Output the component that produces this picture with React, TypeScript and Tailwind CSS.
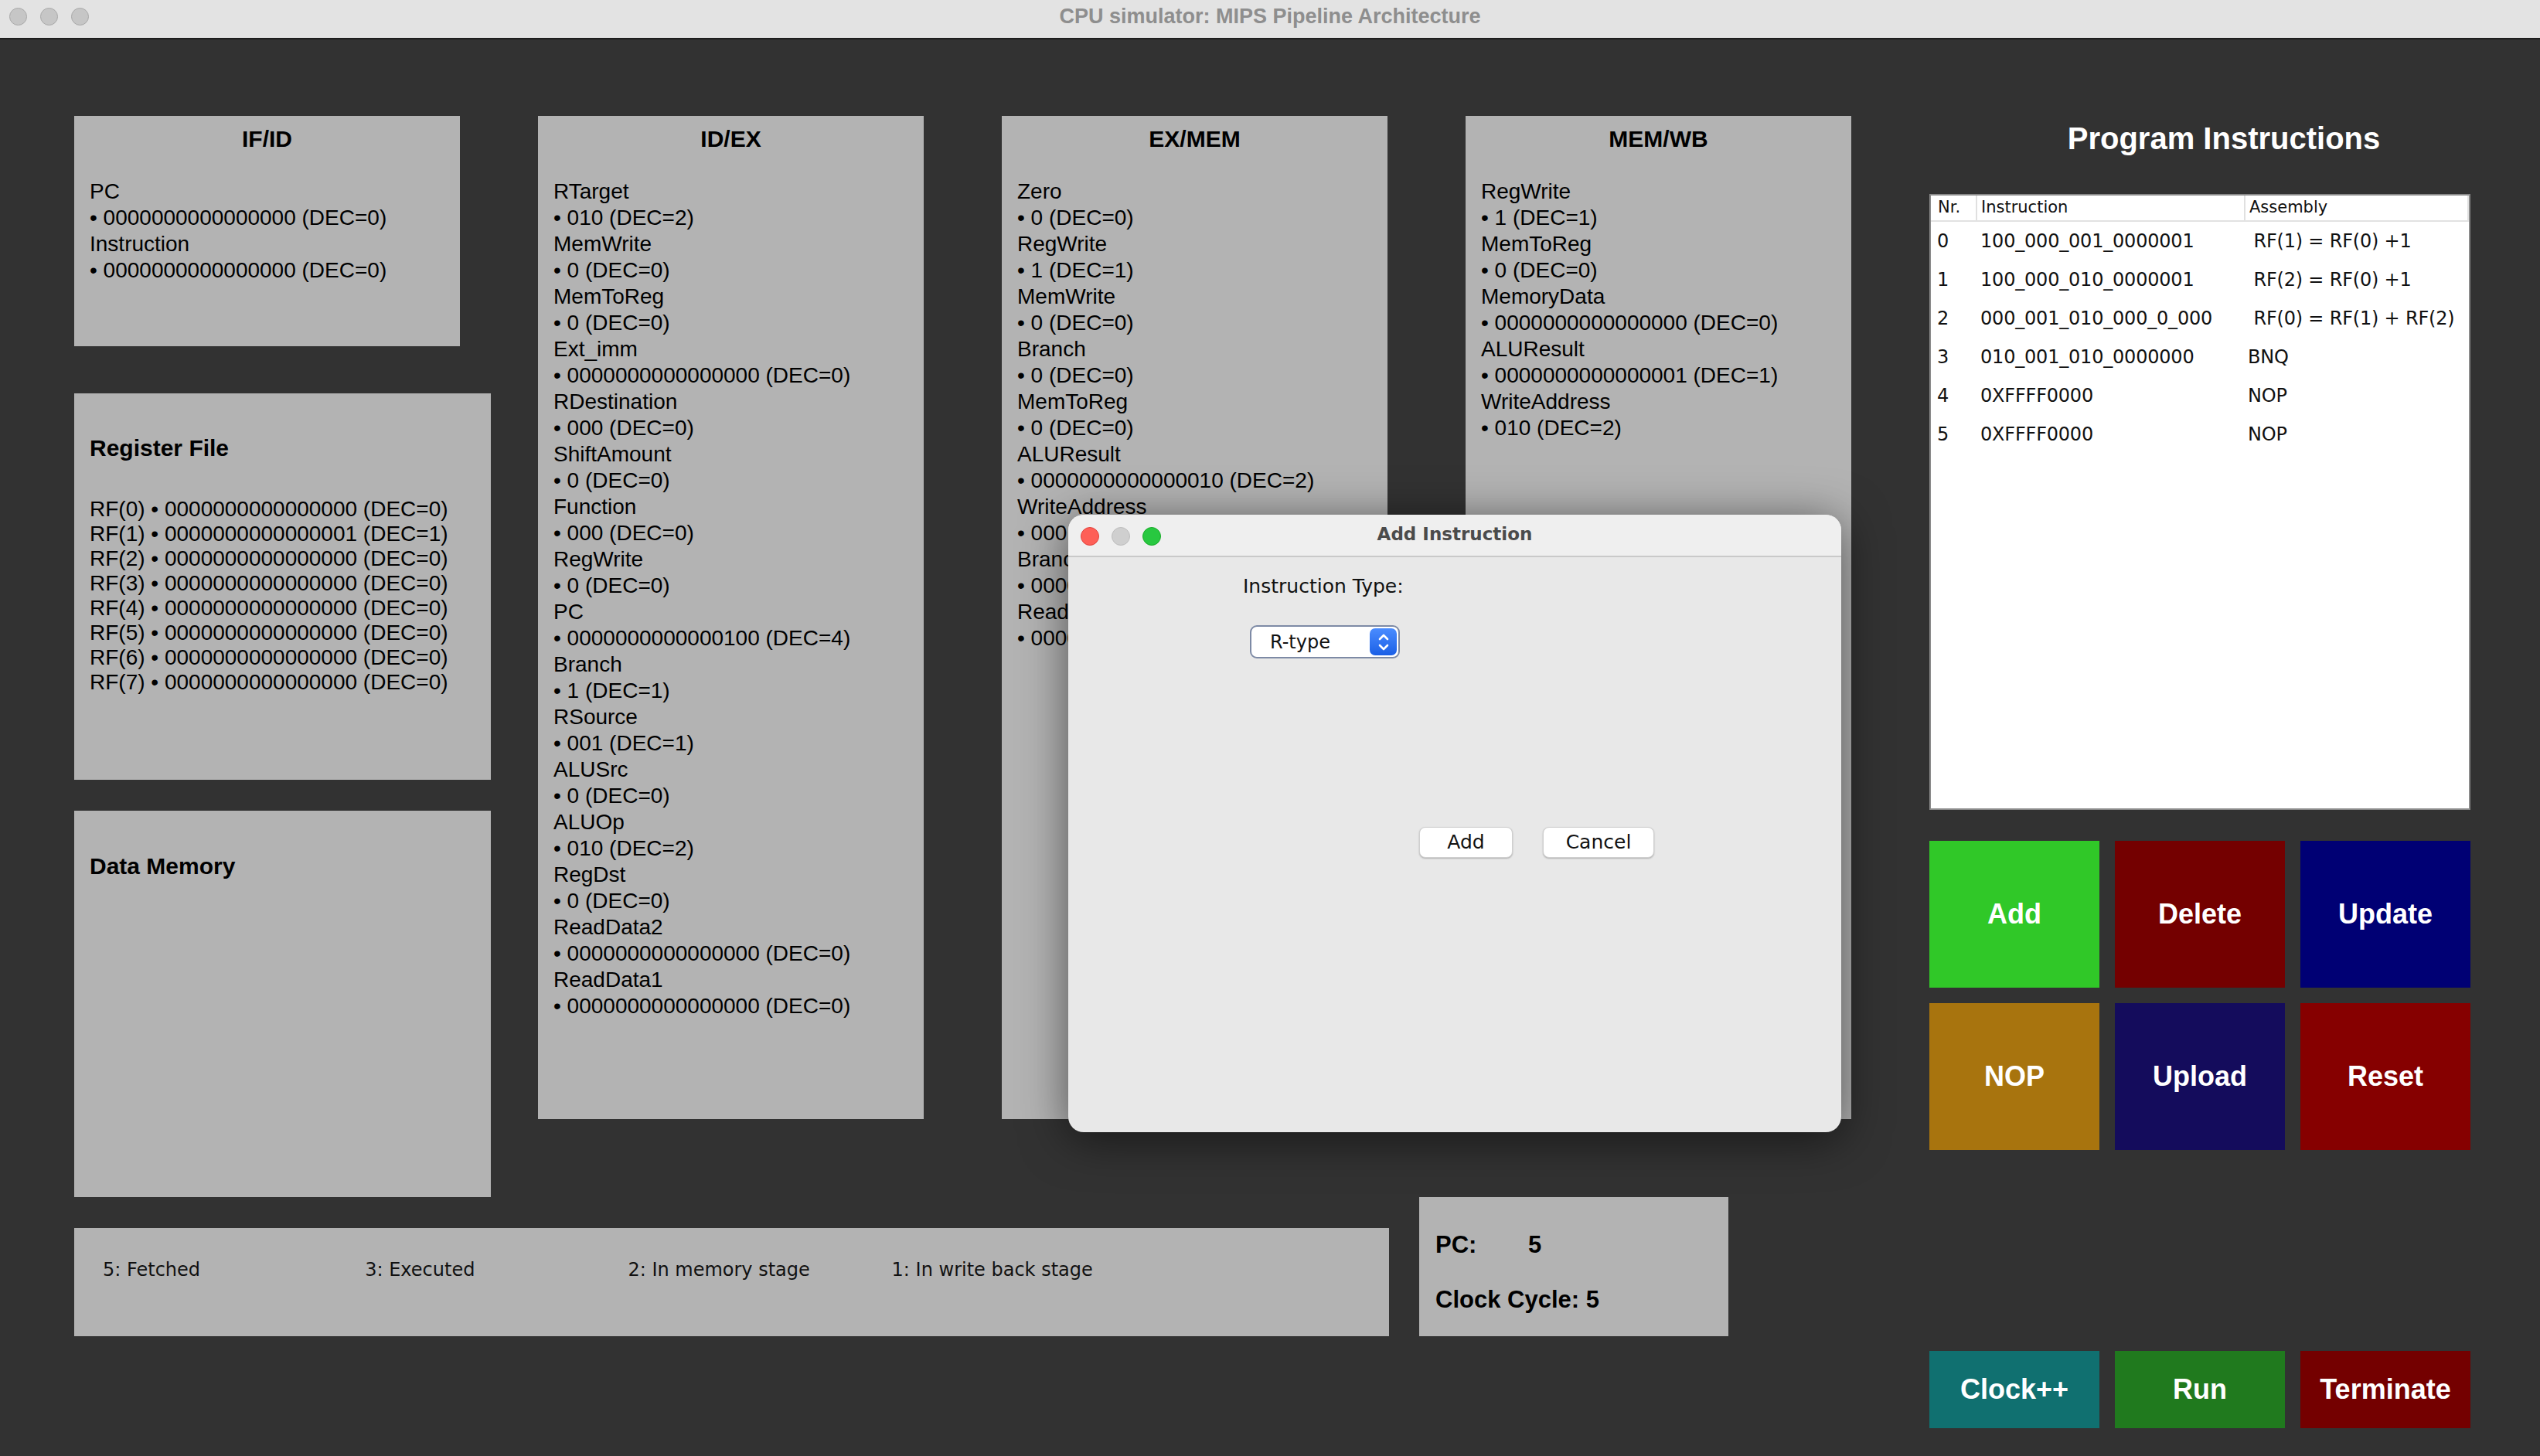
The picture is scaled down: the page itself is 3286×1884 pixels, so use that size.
import React from "react";

type Field = [string, string];

const idEx: Field[] = [
  ["RTarget", "010 (DEC=2)"],
  ["MemWrite", "0 (DEC=0)"],
  ["MemToReg", "0 (DEC=0)"],
  ["Ext_imm", "0000000000000000 (DEC=0)"],
  ["RDestination", "000 (DEC=0)"],
  ["ShiftAmount", "0 (DEC=0)"],
  ["Function", "000 (DEC=0)"],
  ["RegWrite", "0 (DEC=0)"],
  ["PC", "0000000000000100 (DEC=4)"],
  ["Branch", "1 (DEC=1)"],
  ["RSource", "001 (DEC=1)"],
  ["ALUSrc", "0 (DEC=0)"],
  ["ALUOp", "010 (DEC=2)"],
  ["RegDst", "0 (DEC=0)"],
  ["ReadData2", "0000000000000000 (DEC=0)"],
  ["ReadData1", "0000000000000000 (DEC=0)"],
];

const exMem: Field[] = [
  ["Zero", "0 (DEC=0)"],
  ["RegWrite", "1 (DEC=1)"],
  ["MemWrite", "0 (DEC=0)"],
  ["Branch", "0 (DEC=0)"],
  ["MemToReg", "0 (DEC=0)"],
  ["ALUResult", "0000000000000010 (DEC=2)"],
  ["WriteAddress", "000 (DEC=0)"],
  ["BranchAddress", "0000000000000000 (DEC=0)"],
  ["ReadData2", "0000000000000000 (DEC=0)"],
];

const memWb: Field[] = [
  ["RegWrite", "1 (DEC=1)"],
  ["MemToReg", "0 (DEC=0)"],
  ["MemoryData", "0000000000000000 (DEC=0)"],
  ["ALUResult", "0000000000000001 (DEC=1)"],
  ["WriteAddress", "010 (DEC=2)"],
];

const ifId: Field[] = [
  ["PC", "0000000000000000 (DEC=0)"],
  ["Instruction", "0000000000000000 (DEC=0)"],
];

const registers = [0, 1, 0, 0, 0, 0, 0, 0];

const program = [
  ["0", "100_000_001_0000001", " RF(1) = RF(0) +1"],
  ["1", "100_000_010_0000001", " RF(2) = RF(0) +1"],
  ["2", "000_001_010_000_0_000", " RF(0) = RF(1) + RF(2)"],
  ["3", "010_001_010_0000000", "BNQ"],
  ["4", "0XFFFF0000", "NOP"],
  ["5", "0XFFFF0000", "NOP"],
];

const StagePanel = ({ title, fields, height }: { title: string; fields: Field[]; height: string }) => (
  <div className={`w-[499px] ${height} bg-[#b3b3b3] text-black font-['Liberation_Sans',Arial,sans-serif]`}>
    <div className="h-[58px] flex items-center justify-center text-[30px] font-bold">{title}</div>
    <div className="mt-[23px] pl-[20px] text-[28px] leading-[34px]">
      {fields.map(([name, value]) => (
        <React.Fragment key={name + value}>
          <div>{name}</div>
          <div>• {value}</div>
        </React.Fragment>
      ))}
    </div>
  </div>
);

const ActionButton = ({ label, color, h }: { label: string; color: string; h: string }) => (
  <button
    className={`w-[220px] ${h} ${color} text-white font-bold text-[36px] flex items-center justify-center font-['Liberation_Sans',Arial,sans-serif]`}
  >
    {label}
  </button>
);

const Stepper = () => (
  <div className="w-[35px] h-[35px] rounded-[7px] bg-gradient-to-b from-[#4a8cff] to-[#1a5fe6] flex items-center justify-center">
    <svg width="16" height="26" viewBox="0 0 16 26" fill="none" stroke="white" strokeWidth="2.6" strokeLinecap="round" strokeLinejoin="round">
      <path d="M3 9 L8 4 L13 9" />
      <path d="M3 17 L8 22 L13 17" />
    </svg>
  </div>
);

const AddInstructionDialog = () => (
  <div className="absolute left-[1382px] top-[666px] w-[1000px] h-[799px] rounded-[20px] bg-[#e8e8e8] overflow-hidden shadow-[0_8px_60px_rgba(0,0,0,0.55)] font-['DejaVu_Sans',sans-serif]">
    <div className="relative h-[55px] bg-[#efefef] border-b-2 border-[#c9c9c9] flex items-center justify-center">
      <div className="absolute left-[16px] top-[16px] flex gap-[16px]">
        <span className="w-[24px] h-[24px] rounded-full bg-[#fe5f57] border border-[#e0443e]" />
        <span className="w-[24px] h-[24px] rounded-full bg-[#cfcfcf] border border-[#bdbdbd]" />
        <span className="w-[24px] h-[24px] rounded-full bg-[#28c840] border border-[#1aab29]" />
      </div>
      <span className="mt-[-2px] text-[23px] font-bold text-[#4b4b4b]">Add Instruction</span>
    </div>
    <div className="pl-[226px] pt-[22px]">
      <div className="text-[25px] leading-[32px] text-[#111]">Instruction Type:</div>
      <div className="ml-[9px] mt-[34px] w-[194px] h-[43px] rounded-[9px] border-2 border-[#7d8aa5] bg-white flex items-center justify-between pl-[24px] pr-[2px]">
        <span className="text-[24px] text-[#111]">R-type</span>
        <Stepper />
      </div>
      <div className="ml-[228px] mt-[218px] flex gap-[39px]">
        <button className="w-[121px] h-[40px] rounded-[8px] bg-white border border-[#cfcfcf] shadow-[0_1px_2px_rgba(0,0,0,0.25)] text-[25px] text-[#111]">
          Add
        </button>
        <button className="w-[144px] h-[40px] rounded-[8px] bg-white border border-[#cfcfcf] shadow-[0_1px_2px_rgba(0,0,0,0.25)] text-[25px] text-[#111]">
          Cancel
        </button>
      </div>
    </div>
  </div>
);

export default function App() {
  return (
    <div className="relative min-h-screen w-full bg-[#323232] overflow-hidden">
      {/* window title bar */}
      <div className="relative h-[51px] bg-[#e3e3e3] border-b-2 border-[#1e1e1e] flex justify-center">
        <div className="absolute left-[12px] top-[10px] flex gap-[17px]">
          <span className="w-[23px] h-[23px] rounded-full bg-[#c6c6c6] border border-[#a9a9a9]" />
          <span className="w-[23px] h-[23px] rounded-full bg-[#c6c6c6] border border-[#a9a9a9]" />
          <span className="w-[23px] h-[23px] rounded-full bg-[#c6c6c6] border border-[#a9a9a9]" />
        </div>
        <span className="mt-[1px] text-[27px] font-bold text-[#8e8e8e] font-['Liberation_Sans',Arial,sans-serif]">
          CPU simulator: MIPS Pipeline Architecture
        </span>
      </div>

      <div className="flex pl-[96px] pt-[99px]">
        {/* left: pipeline registers */}
        <div className="flex flex-col">
          <div className="flex items-start">
            <div className="flex flex-col w-[539px]">
              <div className="w-[499px] h-[298px] bg-[#b3b3b3] text-black font-['Liberation_Sans',Arial,sans-serif]">
                <div className="h-[58px] flex items-center justify-center text-[30px] font-bold">IF/ID</div>
                <div className="mt-[23px] pl-[20px] text-[28px] leading-[34px]">
                  {ifId.map(([name, value]) => (
                    <React.Fragment key={name}>
                      <div>{name}</div>
                      <div>• {value}</div>
                    </React.Fragment>
                  ))}
                </div>
              </div>

              <div className="mt-[61px] h-[500px] bg-[#b3b3b3] text-black pl-[20px] font-['Liberation_Sans',Arial,sans-serif]">
                <div className="pt-[53px] text-[30px] leading-[36px] font-bold">Register File</div>
                <div className="mt-[45px] text-[28px] leading-[32px]">
                  {registers.map((v, i) => (
                    <div key={i}>
                      RF({i}) • {v ? "0000000000000001" : "0000000000000000"} (DEC={v})
                    </div>
                  ))}
                </div>
              </div>

              <div className="mt-[40px] h-[500px] bg-[#b3b3b3] text-black pl-[20px] font-['Liberation_Sans',Arial,sans-serif]">
                <div className="pt-[54px] text-[30px] leading-[36px] font-bold">Data Memory</div>
              </div>
            </div>

            <div className="ml-[61px] flex gap-[101px]">
              <StagePanel title="ID/EX" fields={idEx} height="h-[1298px]" />
              <StagePanel title="EX/MEM" fields={exMem} height="h-[1298px]" />
              <StagePanel title="MEM/WB" fields={memWb} height="h-[1298px]" />
            </div>
          </div>

          {/* status row */}
          <div className="flex items-end">
            <div className="w-[1701px] h-[140px] bg-[#b3b3b3] grid grid-cols-5 pt-[40px] text-[24px] leading-[28px] text-[#111] font-['DejaVu_Sans',sans-serif]">
              <span className="pl-[37px]">5: Fetched</span>
              <span className="pl-[36px]">3: Executed</span>
              <span className="pl-[36px]">2: In memory stage</span>
              <span className="pl-[37px]">1: In write back stage</span>
              <span />
            </div>
            <div className="ml-[39px] w-[400px] h-[180px] bg-[#b3b3b3] pl-[21px] pt-[44px] text-[31px] leading-[36px] font-bold text-black font-['Liberation_Sans',Arial,sans-serif]">
              <div className="flex">
                <span className="w-[120px]">PC:</span>
                <span>5</span>
              </div>
              <div className="mt-[35px]">Clock Cycle: 5</div>
            </div>
          </div>
        </div>

        {/* right: program */}
        <div className="ml-[101px] w-[700px] flex flex-col">
          <div className="h-[58px] pl-[62px] flex items-center justify-center text-[40px] font-bold text-white font-['Liberation_Sans',Arial,sans-serif]">
            Program Instructions
          </div>
          <div className="mt-[43px] h-[797px] bg-white border-2 border-[#8a8a8a] font-['DejaVu_Sans',sans-serif] text-[#111]">
            <div className="flex h-[34px] border-b-2 border-[#e2e2e2] text-[21px] items-center">
              <span className="w-[60px] pl-[9px] border-r-2 border-[#e0e0e0]">Nr.</span>
              <span className="w-[347px] pl-[5px] border-r-2 border-[#e0e0e0]">Instruction</span>
              <span className="flex-1 pl-[5px] border-r-2 border-[#e0e0e0]">Assembly</span>
            </div>
            {program.map(([nr, code, asm]) => (
              <div key={nr} className="flex h-[50px] items-center text-[24px] tracking-[-0.2px]">
                <span className="w-[60px] pl-[8px]">{nr}</span>
                <span className="w-[347px] pl-[4px]">{code}</span>
                <span className="flex-1 pl-[3px] whitespace-pre">{asm}</span>
              </div>
            ))}
          </div>

          <div className="mt-[40px] grid grid-cols-3 gap-[20px] w-[700px]">
            <ActionButton label="Add" color="bg-[#30c828]" h="h-[190px]" />
            <ActionButton label="Delete" color="bg-[#740000]" h="h-[190px]" />
            <ActionButton label="Update" color="bg-[#000074]" h="h-[190px]" />
            <ActionButton label="NOP" color="bg-[#a8740e]" h="h-[190px]" />
            <ActionButton label="Upload" color="bg-[#140c5c]" h="h-[190px]" />
            <ActionButton label="Reset" color="bg-[#860000]" h="h-[190px]" />
          </div>

          <div className="mt-[260px] flex gap-[20px]">
            <ActionButton label="Clock++" color="bg-[#107070]" h="h-[100px]" />
            <ActionButton label="Run" color="bg-[#207a1e]" h="h-[100px]" />
            <ActionButton label="Terminate" color="bg-[#740000]" h="h-[100px]" />
          </div>
        </div>
      </div>

      <AddInstructionDialog />
    </div>
  );
}
